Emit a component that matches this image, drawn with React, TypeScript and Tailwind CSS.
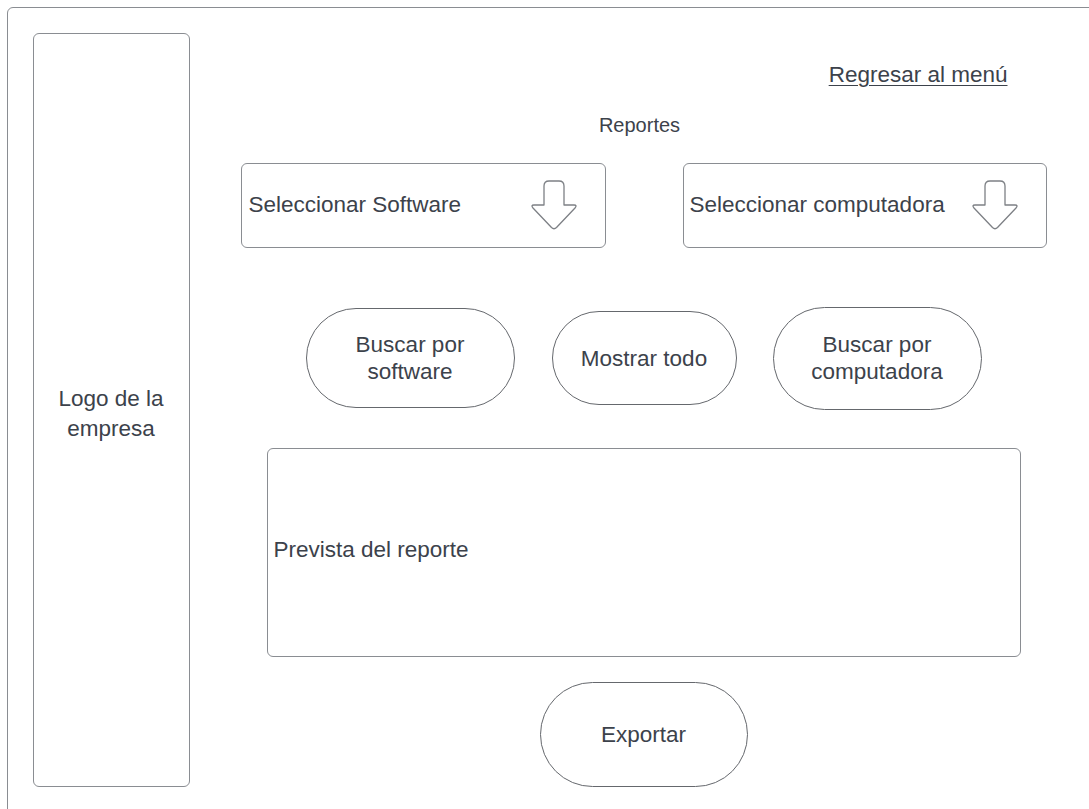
import { ReactNode } from 'react'

const font = { fontFamily: '"Liberation Sans", Arial, sans-serif' }

function DownArrow() {
	return (
		<svg width="48" height="52" viewBox="0 0 48 52" fill="none" className="shrink-0">
			<path
				d="M14 7 Q14 2 19 2 H29 Q34 2 34 7 V26 H44 Q47.5 26 45 29 L26.5 48.5 Q24 51 21.5 48.5 L3 29 Q0.5 26 4 26 H14 Z"
				stroke="#7d8085"
				strokeWidth="1.3"
				strokeLinejoin="round"
			/>
		</svg>
	)
}

function SelectBox({ label, className }: { label: string; className: string }) {
	return (
		<div
			className={`flex h-[85px] items-center justify-between rounded-md border-[1.5px] border-[#8a8d92] pr-[27px] ${className}`}
		>
			<span>{label}</span>
			<DownArrow />
		</div>
	)
}

function Pill({ children, className }: { children: ReactNode; className: string }) {
	return (
		<div
			className={`flex items-center justify-center rounded-full border border-[#65686d] text-center leading-[27px] ${className}`}
		>
			{children}
		</div>
	)
}

export default function App() {
	return (
		<div className="h-screen w-full overflow-hidden bg-white pl-[7px] pt-[7px] text-[22.5px] leading-[26px] text-[#3c424b]" style={font}>
			<div className="flex h-[830px] w-[1110px] rounded-tl-md border-[1.5px] border-[#8a8d92] pl-[24.5px] pt-[24.5px]">
				{/* Sidebar */}
				<div className="flex h-[754px] w-[157px] shrink-0 items-center justify-center rounded-md border-[1.5px] border-[#8a8d92] text-center leading-[30px]">
					<span className="mt-[8px]">
						Logo de la
						<br />
						empresa
					</span>
				</div>

				{/* Main */}
				<div className="flex w-[900px] flex-col">
					<div className="mt-[29px] flex justify-end pr-[82px]">
						<a className="underline decoration-1 underline-offset-[3px]">Regresar al menú</a>
					</div>

					<div className="mt-[26px] text-center text-[20px] leading-[23px]">Reportes</div>

					<div className="mt-[26px] flex">
						<SelectBox label="Seleccionar Software" className="ml-[51px] w-[365px] pl-[7px]" />
						<SelectBox label="Seleccionar computadora" className="ml-[77px] w-[364px] pl-[6px]" />
					</div>

					<div className="mt-[59px] flex items-center">
						<Pill className="ml-[116px] h-[100px] w-[209px]">
							Buscar por
							<br />
							software
						</Pill>
						<Pill className="ml-[37px] h-[94px] w-[185px]">Mostrar todo</Pill>
						<Pill className="ml-[36px] h-[103px] w-[209px]">
							Buscar por
							<br />
							computadora
						</Pill>
					</div>

					<div className="ml-[77px] mt-[38px] flex h-[209px] w-[754px] items-center rounded-md border-[1.5px] border-[#8a8d92] pl-[6px]">
						<span className="mt-[-4px]">Prevista del reporte</span>
					</div>

					<div className="mt-[25px] flex">
						<Pill className="ml-[350px] h-[105px] w-[208px]">Exportar</Pill>
					</div>
				</div>
			</div>
		</div>
	)
}
